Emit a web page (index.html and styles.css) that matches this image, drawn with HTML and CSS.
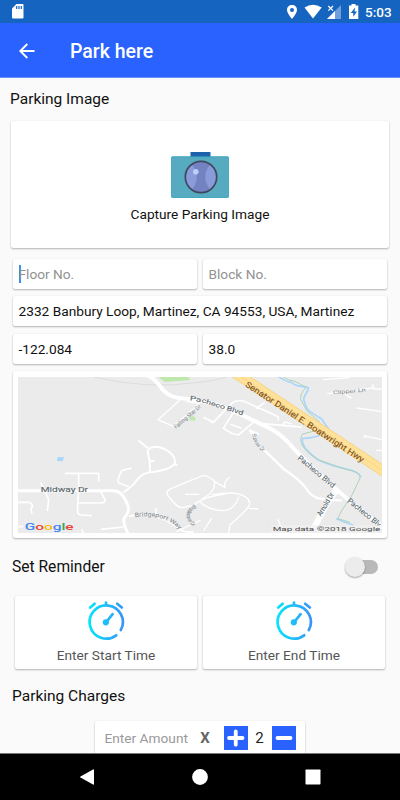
FILE: index.html
```html
<!DOCTYPE html>
<html lang="en">
<head>
<meta charset="utf-8">
<title>Park here</title>
<link rel="stylesheet" href="styles.css">
</head>
<body>
<div class="status">
  <svg class="sd" width="12" height="15" viewBox="0 0 12 15"><path fill="#fff" d="M4.500 0H10.500Q11.500 0 11.500 1V13.500Q11.500 14.500 10.500 14.500H1Q0 14.500 0 13.500V4.500Z"/><path stroke="#1565c0" stroke-width="1.200" d="M4.700 2V5M7 2V5M9.300 2V5"/></svg>
  <svg class="tray" width="74" height="17" viewBox="0 0 74 17">
    <path fill="#fff" fill-rule="evenodd" d="M5 1C2 1 0 3 0 6C0 9 5 15 5 15S10 9 10 6C10 3 8 1 5 1ZM5 4A2 2 0 1 1 5 8A2 2 0 1 1 5 4Z"/>
    <path fill="#fff" d="M17.500 3.500Q26 -1.800 34.700 3.500L26 14.500Z"/>
    <path fill="#6da0dc" d="M54 1V15H40Z"/><path fill="#fff" d="M48 7V15H40Z"/>
    <path stroke="#fff" stroke-width="1.200" d="M41.300 2L46 6.700M46 2L41.300 6.700"/>
    <path fill="#fff" d="M64.500 0H68.500V1.500H71.300V15H62V1.500H64.500Z"/><path fill="#1565c0" d="M68 3.500L63.800 9H66.300V12.800L70 7.600H67.500Z"/>
  </svg>
  <span class="clock">5:03</span>
</div>
<header class="appbar">
  <svg width="16" height="16" viewBox="0 0 16 16"><path fill="none" stroke="#fff" stroke-width="1.900" d="M15.500 8H1.500M8.300 1L1.300 8L8.300 15"/></svg>
  <h1>Park here</h1>
</header>
<main>
  <h2 class="image-title">Parking Image</h2>
  <section class="card capture">
    <svg width="58" height="46" viewBox="0 0 58 46">
      <path fill="#1c62ad" d="M19.500 0H39.500V5H19.500Z"/>
      <rect x=".4" y="4.700" width="57.200" height="40.800" rx="1" fill="#56abc0" stroke="#2d9db9" stroke-width=".8"/>
      <circle cx="30" cy="25" r="15.700" fill="#7383c1"/>
      <path fill="#8a9bda" d="M21 12.500Q30.500 25 21 37.500A15.500 15.500 0 0 1 21 12.500ZM39 12.500Q29.500 25 39 37.500A15.500 15.500 0 0 0 39 12.500Z"/>
      <circle cx="30" cy="25" r="15.700" fill="none" stroke="#40485f" stroke-width="1.700"/>
      <circle cx="24.800" cy="19.800" r="2.800" fill="#bcd0fa"/>
    </svg>
    <span>Capture Parking Image</span>
  </section>
  <section class="fields">
    <div class="card field hint focused">Floor No.</div>
    <div class="card field hint">Block No.</div>
    <div class="card field wide">2332 Banbury Loop, Martinez, CA 94553, USA, Martinez</div>
    <div class="card field">-122.084</div>
    <div class="card field">38.0</div>
  </section>
  <section class="card map">
    <svg width="364" height="156" viewBox="54 36 1092 468" preserveAspectRatio="none">
      <rect x="54" y="36" width="1092" height="468" fill="#ebebeb"/>
      <path fill="#bfe9ac" d="M475 36H565L570 45L495 51ZM568 158L578 153L588 159L583 168L570 166Z"/>
      <path fill="#a9d6fb" d="M174 276L192 277L188 289L170 288Z"/>
      <path fill="none" stroke="#d4d5d6" stroke-width="2" d="M280 36Q440 74 600 52Q650 46 680 36"/>
      <g fill="none" stroke="#fff" stroke-linejoin="round">
        <path stroke-width="12" d="M440 30C475 45 475 62 492 78S525 100 560 101Q650 110 730 152L810 190Q850 212 880 250L940 310L1010 374L1060 416L1150 488"/>
        <path stroke-width="9" d="M54 377H320C355 375 365 382 378 408S387 440 372 460Q369 475 384 506"/>
        <path stroke-width="6" d="M370 382Q398 365 410 346Q425 325 450 322C490 318 515 308 524 296C530 270 495 246 465 245Q442 248 443 262Q452 290 449 320M443 249L415 226M449 288H463M520 298L532 300"/>
        <path stroke-width="5" d="M395 309L365 317Q348 350 358 355L387 365M195 325H296V350M236 325V377L233 414H302Q320 413 314 402L302 380M233 414V442Q235 450 245 450L275 452M122 353L146 403L142 438M54 412H86Q100 417 97 426Q90 425 96 446M54 486L70 484M303 493L370 486M244 493L251 505M387 454Q430 445 468 455T540 494Q560 504 580 500M468 455V430"/>
        <path stroke-width="4" d="M540 105L474 164L520 184L595 119M560 110L600 116M600 335L515 370Q490 380 510 399Q530 427 545 428L580 421Q600 405 628 396L680 386M555 388H598M530 500L602 465"/>
        <path stroke-width="5" d="M610 157L640 172L632 170M640 172L695 115Q708 104 730 108L835 155V166M768 130L794 113M730 152L702 139L670 190L695 205L715 210L770 164M690 178L725 190M780 175L890 185L905 187M848 180L855 171L875 177"/>
        <path stroke-width="7" d="M776 208L750 197L782 245L850 311Q900 345 915 366Q935 399 965 402L1025 407"/>
        <path stroke-width="18" d="M1008 377L980 418L940 492"/>
        <path stroke-width="4" d="M600 334Q620 326 643 349L676 368Q669 350 690 336M643 349Q650 380 605 402M635 390Q710 375 738 397Q755 410 746 424T690 480L686 505M600 410Q625 436 675 437Q706 430 717 395M746 430L775 432M635 460L610 498M834 463L850 505M970 44L1050 38M1034 86L1054 100M1117 57L1122 72H1146M980 86L1120 69M1070 129L1146 140M1090 212L1146 224M1094 212L1095 220M1128 256H1146"/>
      </g>
      <g fill="none">
        <path stroke="#a9d6fb" stroke-width="5" stroke-linejoin="round" d="M835 34Q860 52 875 52C888 70 910 60 925 68C925 87 903 92 915 115Q920 136 938 145L965 162L990 199Q940 222 908 220Q900 245 955 285Q990 302 1040 312Q1075 320 1083 336M1008 461L1060 481"/>
        <path stroke="#aed2b8" stroke-width="3" stroke-linejoin="round" d="M850 36Q865 47 885 49L918 67Q899 88 902 103Q913 122 920 137L960 172M960 194L907 207C890 237 925 267 955 284L1040 314Q1085 320 1080 340L1052 398Q1020 440 1014 461L1050 472"/>
        <path stroke="#f1cf73" stroke-width="32" d="M700 20L1165 328"/>
        <path stroke="#ffe199" stroke-width="28" d="M700 20L1165 328"/>
        <path stroke="#f7d27a" stroke-width="2" d="M700 20L1165 328"/>
      </g>
      <defs>
        <path id="fall" d="M528 192L608 124"/>
        <path id="sun" d="M756 207Q760 238 792 264"/>
        <path id="bridge" d="M405 457Q490 442 540 496"/>
        <path id="ring" d="M583 418Q536 448 584 490"/>
      </defs>
      <g class="road">
        <text transform="translate(122 382)" textLength="142" lengthAdjust="spacingAndGlyphs">Midway Dr</text>
        <text transform="translate(569 106) rotate(8)" textLength="34" lengthAdjust="spacingAndGlyphs">Pa</text>
        <text transform="translate(604 111) rotate(18)" textLength="130" lengthAdjust="spacingAndGlyphs">checo Blvd</text>
        <g class="slanted">
          <text transform="translate(892 281) rotate(40)" textLength="138" lengthAdjust="spacingAndGlyphs">Pacheco Blvd</text>
          <text transform="translate(1041 410) rotate(39)" textLength="122" lengthAdjust="spacingAndGlyphs">Pacheco Blv</text>
          <text transform="translate(963 455) rotate(-59)" textLength="78" lengthAdjust="spacingAndGlyphs">Arnold Dr</text>
        </g>
      </g>
      <g class="road minor">
        <text class="clipper" transform="translate(1000 88) rotate(-5)" textLength="98" lengthAdjust="spacingAndGlyphs">Clipper Ln</text>
        <text textLength="100" lengthAdjust="spacingAndGlyphs"><textPath href="#fall">Falling Star Dr</textPath></text>
        <text textLength="64" lengthAdjust="spacingAndGlyphs"><textPath href="#sun">Sunrise Dr</textPath></text>
        <text textLength="144" lengthAdjust="spacingAndGlyphs"><textPath href="#bridge">Bridgeport Way</textPath></text>
        <text textLength="83" lengthAdjust="spacingAndGlyphs"><textPath href="#ring">Bristlecone Dr</textPath></text>
      </g>
      <text class="hwy" transform="translate(734 63) rotate(33.200)" textLength="420" lengthAdjust="spacingAndGlyphs">Senator Daniel E. Boatwright Hwy</text>
      <text class="logo" x="74" y="494" textLength="147" lengthAdjust="spacingAndGlyphs"><tspan fill="#4285f4">G</tspan><tspan fill="#ea4335">o</tspan><tspan fill="#fbbc05">o</tspan><tspan fill="#4285f4">g</tspan><tspan fill="#34a853">l</tspan><tspan fill="#ea4335">e</tspan></text>
      <rect x="812" y="480" width="334" height="24" fill="#f1f1f1" opacity=".7"/>
      <text class="credit" x="818" y="497" textLength="323" lengthAdjust="spacingAndGlyphs">Map data ©2018 Google</text>
    </svg>
  </section>
  <section class="reminder">
    <h2>Set Reminder</h2>
    <span class="switch"></span>
  </section>
  <section class="times">
    <div class="card time">
      <svg width="38" height="40" viewBox="0 0 38 40"><defs><linearGradient id="aqua" gradientUnits="userSpaceOnUse" x1="2" y1="0" x2="38" y2="0"><stop stop-color="#05e4fb"/><stop offset="1" stop-color="#3b91f8"/></linearGradient></defs><g fill="none" stroke="url(#aqua)" stroke-width="2.700" stroke-linecap="round"><path d="M29.200 34.300A16.600 16.600 0 1 1 33.800 29M19 4.500V1.700M3.300 6.500L7.600 2.800M30.200 2.800L34.800 6.500M19 21.300L25.600 13.200"/></g><circle cx="18.800" cy="21.300" r="3.100" fill="url(#aqua)"/></svg>
      <span>Enter Start Time</span>
    </div>
    <div class="card time">
      <svg width="38" height="40" viewBox="0 0 38 40"><g fill="none" stroke="url(#aqua)" stroke-width="2.700" stroke-linecap="round"><path d="M29.200 34.300A16.600 16.600 0 1 1 33.800 29M19 4.500V1.700M3.300 6.500L7.600 2.800M30.200 2.800L34.800 6.500M19 21.300L25.600 13.200"/></g><circle cx="18.800" cy="21.300" r="3.100" fill="url(#aqua)"/></svg>
      <span>Enter End Time</span>
    </div>
  </section>
  <h2 class="charges-title">Parking Charges</h2>
  <section class="card charges">
    <span class="amount">Enter Amount</span>
    <b>X</b>
    <svg class="step" viewBox="0 0 24 24"><path d="M5 12H18.500M11.750 5.300V18.700"/></svg>
    <span class="count">2</span>
    <svg class="step" viewBox="0 0 24 24"><path d="M5.500 12H18.500"/></svg>
  </section>
</main>
<nav>
  <svg width="16" height="16" viewBox="0 0 16 16"><path d="M14 .5Q15 0 15 1V15Q15 16 14 15.500L1.500 8.600Q.5 8 1.500 7.400Z"/></svg>
  <svg width="16" height="16" viewBox="0 0 16 16"><circle cx="8" cy="8" r="7.900"/></svg>
  <svg width="16" height="16" viewBox="0 0 16 16"><rect x=".5" y=".5" width="15" height="15" rx=".7"/></svg>
</nav>
</body>
</html>
```
FILE: styles.css
```css
* { box-sizing: border-box; }
body {
  margin: 0;
  width: 400px;
  height: 800px;
  display: flex;
  flex-direction: column;
  overflow: hidden;
  background: #fafafa;
  color: #111;
  font-family: Roboto, sans-serif;
}
svg { display: block; flex: none; }
.status {
  height: 23px;
  flex: none;
  display: flex;
  align-items: center;
  padding: 0 7px 0 12px;
  background: #1565c0;
  color: #fff;
}
.tray { margin-left: auto; margin-right: 4px; margin-top: 2px; }
.clock { font-size: 13.5px; font-weight: 500; width: 28px; padding-top: 1px; }
.appbar {
  height: 55px;
  flex: none;
  display: flex;
  align-items: center;
  gap: 35px;
  padding: 1px 0 0 19px;
  background: #2962ff;
  border-bottom: 1px solid #6790fd;
  color: #fff;
}
h1 { margin: 0; font-size: 19.5px; font-weight: 500; line-height: 24px; padding-top: 2px; }
h2 { margin: 0; font-size: 15.6px; font-weight: 400; line-height: 20px; }
main { height: 675px; flex: none; overflow: hidden; }
.card {
  background: #fff;
  border-radius: 2px;
  box-shadow: 0 1px 2px rgba(0,0,0,.28), 0 0 1px rgba(0,0,0,.12);
}
.image-title { margin: 11px 0 0 10px; font-size: 15.5px; }
.capture {
  margin: 12px 11px 0;
  height: 127px;
  padding-top: 31px;
  display: flex;
  flex-direction: column;
  align-items: center;
  gap: 6px;
  font-size: 13.7px;
  line-height: 20px;
}
.fields {
  margin: 11px 13px 0;
  display: grid;
  grid-template-columns: 184px 184px;
  grid-auto-rows: 30px;
  gap: 7.3px 6px;
}
.field { padding-left: 5.5px; font-size: 13.7px; line-height: 31px; white-space: nowrap; }
.wide { grid-column: span 2; }
.hint { color: #929292; }
.focused::before {
  content: "";
  display: inline-block;
  width: 2px;
  height: 18px;
  margin-right: -2px;
  vertical-align: -4px;
  background: #3b91ee;
}
.map { margin: 7px 13px 0; padding: 6px 5px; height: 167px; }
.road { font-size: 19px; fill: #59676d; stroke: #59676d; stroke-width: .3px; }
.slanted { font-size: 22px; }
.minor { font-size: 18px; fill: #788389; stroke: none; }
.clipper { font-size: 15px; }
.hwy { font-size: 25px; fill: #81511d; stroke: #81511d; stroke-width: .4px; }
.logo { font-size: 29px; font-weight: 500; }
.credit { font-size: 18px; fill: #4b4b4b; }
.reminder {
  margin: 19px 22px 0 12px;
  display: flex;
  align-items: center;
  justify-content: space-between;
}
.switch {
  width: 30px;
  height: 14px;
  border-radius: 7px;
  background: #b9b9b9;
  display: flex;
  align-items: center;
}
.switch::before {
  content: "";
  flex: none;
  width: 20px;
  height: 20px;
  margin-left: -3px;
  border-radius: 50%;
  background: #ececec;
  box-shadow: 0 1px 2px rgba(0,0,0,.35);
}
.times {
  margin: 19px 14px 0 15px;
  display: grid;
  grid-template-columns: 182px 182px;
  gap: 6px;
}
.time {
  height: 73px;
  padding-top: 5px;
  display: flex;
  flex-direction: column;
  align-items: center;
  gap: 4px;
  font-size: 13.7px;
  line-height: 20px;
  color: #555;
}
.charges-title { margin: 17px 0 0 12px; font-size: 15.5px; }
.charges {
  width: 210px;
  height: 45px;
  margin: 15px auto 0;
  padding: 5px 9.5px;
  display: flex;
  align-items: flex-start;
  font-size: 13.7px;
  line-height: 24px;
}
.amount { width: 96.5px; color: #999; }
.charges b { width: 23.5px; color: #666; font-weight: 700; font-size: 15px; }
.step { width: 24px; height: 24px; background: #2962ff; fill: none; stroke: #fff; stroke-width: 3.8px; stroke-linecap: round; }
.count { width: 24px; text-align: center; font-size: 15px; color: #222; }
nav {
  height: 47px;
  flex: none;
  background: #000;
  border-top: 1px solid #777;
  display: flex;
  justify-content: center;
  align-items: center;
  gap: 97px;
}
nav svg { fill: #fff; }
```
